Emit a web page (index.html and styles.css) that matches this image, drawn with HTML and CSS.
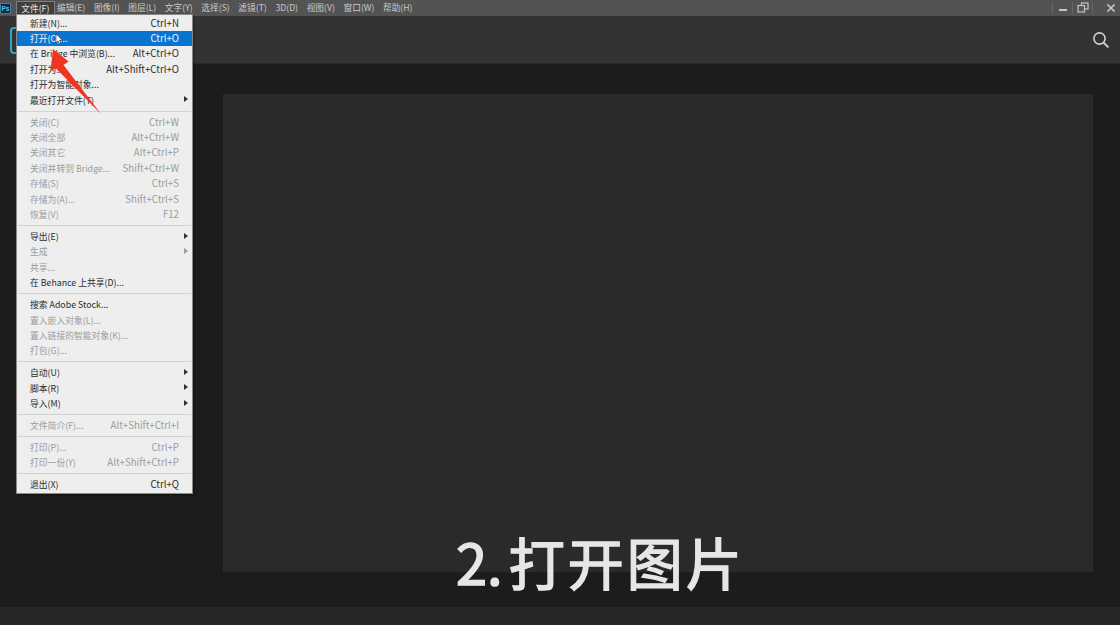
FILE: index.html
```html
<!DOCTYPE html>
<html lang="zh-CN">
<head>
    <meta charset="UTF-8">
    <title>Photoshop</title>
    <link rel="stylesheet" href="styles.css">
</head>
<body>
    <div id="app">
        <div class="titlebar">
            <div class="pslogo">Ps</div>
            <div class="menubar">
                <span class="top open">文件(F)</span>
                <span class="top">编辑(E)</span>
                <span class="top">图像(I)</span>
                <span class="top">图层(L)</span>
                <span class="top">文字(Y)</span>
                <span class="top">选择(S)</span>
                <span class="top">滤镜(T)</span>
                <span class="top">3D(D)</span>
                <span class="top">视图(V)</span>
                <span class="top">窗口(W)</span>
                <span class="top">帮助(H)</span>
            </div>
            <div class="winbtns">
                <div class="winbtn">
                    <svg width="10" height="10" viewBox="0 0 10 10"><rect x="1" y="6" width="8" height="2" fill="#c4c4c4"/></svg>
                </div>
                <div class="winbtn">
                    <svg width="12" height="11" viewBox="0 0 12 11" fill="none" stroke="#c4c4c4" stroke-width="1.2"><rect x="4.5" y="1" width="6.5" height="6"/><rect x="1" y="3.5" width="6.5" height="6.5" fill="#555"/></svg>
                </div>
                <div class="winbtn last">
                    <svg width="10" height="10" viewBox="0 0 10 10" stroke="#c8c8c8" stroke-width="1.7"><path d="M1.5 1.5 8.5 8.5M8.5 1.5 1.5 8.5"/></svg>
                </div>
            </div>
        </div>

        <div class="toolbar">
            <div class="homebtn"></div>
            <svg class="search" width="18" height="18" viewBox="0 0 18 18" fill="none" stroke="#d2d2d2" stroke-width="1.6"><circle cx="7.5" cy="7.5" r="5.6"/><path d="M11.6 11.6 16.4 16.4" stroke-width="2"/></svg>
        </div>

        <div class="workspace">
            <div class="canvas"></div>
        </div>
        <div class="statusbar"></div>

        <div class="caption"><span class="capnum">2.</span>打开图片</div>

        <div class="filemenu">
            <div class="item"><span>新建(N)...</span><span class="key">Ctrl+N</span></div>
            <div class="item active"><span>打开(O)...</span><span class="key">Ctrl+O</span></div>
            <div class="item"><span>在 Bridge 中浏览(B)...</span><span class="key">Alt+Ctrl+O</span></div>
            <div class="item"><span>打开为...</span><span class="key">Alt+Shift+Ctrl+O</span></div>
            <div class="item"><span>打开为智能对象...</span></div>
            <div class="item sub"><span>最近打开文件(T)</span></div>
            <div class="sep"></div>
            <div class="item off"><span>关闭(C)</span><span class="key">Ctrl+W</span></div>
            <div class="item off"><span>关闭全部</span><span class="key">Alt+Ctrl+W</span></div>
            <div class="item off"><span>关闭其它</span><span class="key">Alt+Ctrl+P</span></div>
            <div class="item off"><span>关闭并转到 Bridge...</span><span class="key">Shift+Ctrl+W</span></div>
            <div class="item off"><span>存储(S)</span><span class="key">Ctrl+S</span></div>
            <div class="item off"><span>存储为(A)...</span><span class="key">Shift+Ctrl+S</span></div>
            <div class="item off"><span>恢复(V)</span><span class="key">F12</span></div>
            <div class="sep"></div>
            <div class="item sub"><span>导出(E)</span></div>
            <div class="item sub off"><span>生成</span></div>
            <div class="item off"><span>共享...</span></div>
            <div class="item"><span>在 Behance 上共享(D)...</span></div>
            <div class="sep"></div>
            <div class="item"><span>搜索 Adobe Stock...</span></div>
            <div class="item off"><span>置入嵌入对象(L)...</span></div>
            <div class="item off"><span>置入链接的智能对象(K)...</span></div>
            <div class="item off"><span>打包(G)...</span></div>
            <div class="sep"></div>
            <div class="item sub"><span>自动(U)</span></div>
            <div class="item sub"><span>脚本(R)</span></div>
            <div class="item sub"><span>导入(M)</span></div>
            <div class="sep"></div>
            <div class="item off"><span>文件简介(F)...</span><span class="key">Alt+Shift+Ctrl+I</span></div>
            <div class="sep"></div>
            <div class="item off"><span>打印(P)...</span><span class="key">Ctrl+P</span></div>
            <div class="item off"><span>打印一份(Y)</span><span class="key">Alt+Shift+Ctrl+P</span></div>
            <div class="sep"></div>
            <div class="item"><span>退出(X)</span><span class="key">Ctrl+Q</span></div>
        </div>

        <!-- cursor and red arrow on top of the menu -->
        <svg class="overlay" width="120" height="125" viewBox="0 0 120 125">
            <path d="M101 114 63.500 65 68.500 61.500 53 49 50.500 71 56 68.500Z" fill="#ee3524"/>
            <path d="M56 34v9l2-2 1.500 3 1.500-.7-1.500-3h3Z" fill="#fff" stroke="#222" stroke-width=".6"/>
        </svg>
    </div>
</body>
</html>
```

FILE: styles.css
```css
html, body {
    margin: 0;
    padding: 0;
    background-color: #1c1c1c;
}

#app {
    position: relative;
    width: 1120px;
    height: 625px;
    overflow: hidden;
    display: flex;
    flex-direction: column;
    font-family: "Noto Sans CJK SC", "Liberation Sans", sans-serif;
}

.titlebar {
    height: 16px;
    background-color: #535353;
    display: flex;
    align-items: center;
    flex-shrink: 0;
}

.pslogo {
    width: 9px;
    height: 9px;
    margin-left: 0;
    background-color: #0d2a3e;
    border: 1px solid #3d7ea6;
    color: #5cc0ee;
    font: bold 6.5px/9px "Liberation Sans", sans-serif;
    text-align: center;
}

.menubar {
    display: flex;
    margin-left: 6px;
}

.top {
    padding: 0 4.3px;
    line-height: 14px;
    height: 14px;
    font-size: 8.7px;
    color: #c9c9c9;
    white-space: nowrap;
}

.top.open {
    background-color: #3f3f3f;
    border: 1px solid #808080;
    border-bottom: none;
    margin-left: -1px;
    margin-right: -2px;
    color: #e4e4e4;
}

.winbtns {
    margin-left: auto;
    display: flex;
    height: 13px;
}

.winbtn {
    width: 19px;
    height: 12px;
    border-left: 1px solid #666;
    display: flex;
    align-items: center;
    justify-content: center;
}

.winbtn.last {
    width: 28px;
    padding-left: 9px;
    box-sizing: border-box;
}

.toolbar {
    height: 48px;
    background-color: #333333;
    border-bottom: 1px solid #2a2a2a;
    box-sizing: border-box;
    display: flex;
    align-items: center;
    justify-content: space-between;
    flex-shrink: 0;
}

.homebtn {
    width: 30px;
    height: 23px;
    margin-left: 10px;
    margin-top: 1px;
    border: 2px solid #35a4cf;
    border-radius: 4px;
}

.search {
    margin-right: 10px;
    margin-top: 1px;
}

.workspace {
    flex: 1;
    background-color: #1c1c1c;
    padding: 30px 27px 35px 223px;
    display: flex;
}

.canvas {
    flex: 1;
    background-color: #2a2a2a;
}

.statusbar {
    height: 18px;
    background-color: #262626;
    flex-shrink: 0;
}

.caption {
    position: absolute;
    left: 456px;
    top: 525px;
    font-size: 56px;
    line-height: 72px;
    font-weight: 400;
    letter-spacing: 3px;
    -webkit-text-stroke: 1.500px #e6e6e4;
    color: #e6e6e4;
    white-space: nowrap;
}

.capnum {
    letter-spacing: 0;
    margin-right: 6px;
}

.filemenu {
    position: absolute;
    left: 16px;
    top: 14px;
    width: 175px;
    padding: 0.3px 0 1px;
    background-color: #eeeeee;
    border: 1px solid #8a8a8a;
    box-shadow: 1px 1px 2px rgba(0, 0, 0, 0.4);
}

.item {
    height: 15.45px;
    padding: 0 13px;
    display: flex;
    justify-content: space-between;
    align-items: center;
    font-size: 8.8px;
    line-height: 15px;
    color: #2c2c2c;
    white-space: nowrap;
    position: relative;
}

.key {
    font-size: 9.700px;
}

.item.active {
    background-color: #0a74d1;
    color: #f2f6fb;
}

.item.off {
    color: #9c9c9c;
}

.item.sub::after {
    content: "";
    position: absolute;
    right: 4px;
    top: 4px;
    border-left: 4px solid #333;
    border-top: 3.500px solid transparent;
    border-bottom: 3.500px solid transparent;
}

.item.sub.off::after {
    border-left-color: #999;
}

.sep {
    height: 1px;
    background-color: #d2d2d2;
    margin: 2.600px 1px 2.800px;
}

.overlay {
    position: absolute;
    left: 0;
    top: 0;
}
```
